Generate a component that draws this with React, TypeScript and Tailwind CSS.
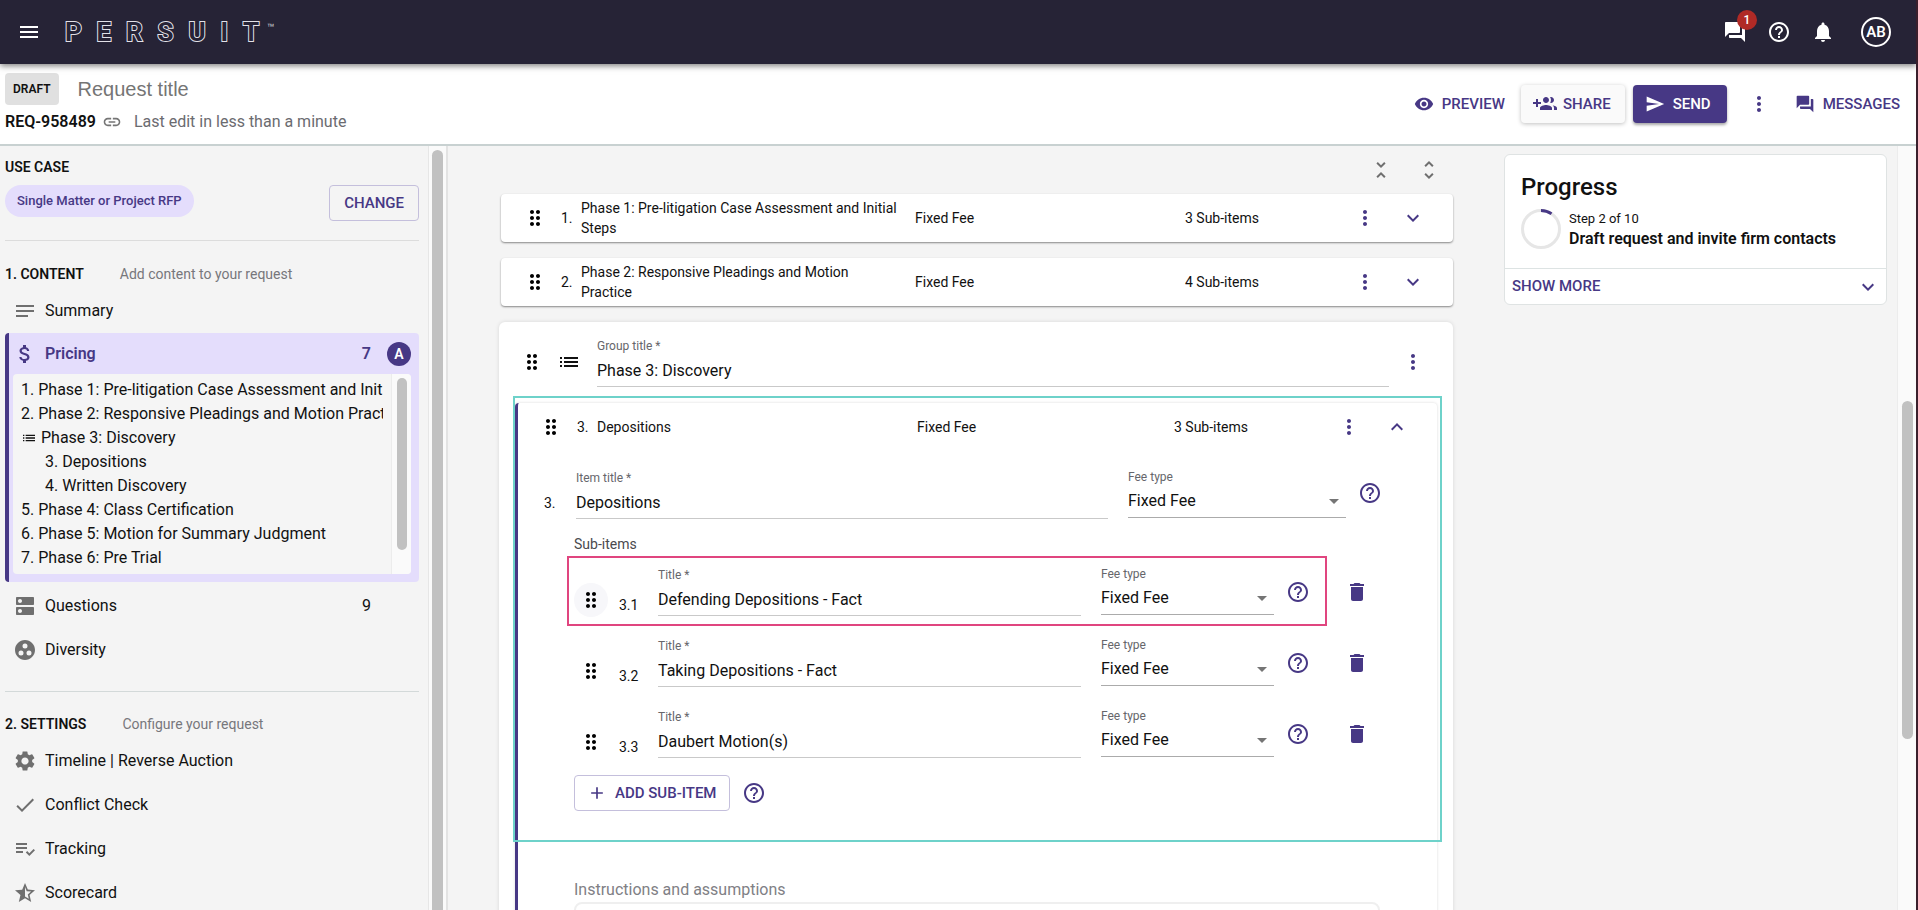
import { useState, type ReactNode } from "react";
import {
  MdAdd,
  MdArrowDropDown,
  MdAttachMoney,
  MdCheck,
  MdDelete,
  MdDns,
  MdDragIndicator,
  MdExpandLess,
  MdExpandMore,
  MdForum,
  MdGroupWork,
  MdHelpOutline,
  MdLink,
  MdList,
  MdMenu,
  MdMoreVert,
  MdNotes,
  MdNotifications,
  MdPlaylistAddCheck,
  MdSend,
  MdSettings,
  MdStarHalf,
  MdUnfoldLess,
  MdUnfoldMore,
  MdVisibility,
} from "react-icons/md";

const outline = [
  { number: "1.", title: "Phase 1: Pre-litigation Case Assessment and Initial Steps" },
  { number: "2.", title: "Phase 2: Responsive Pleadings and Motion Practice" },
  { group: true, title: "Phase 3: Discovery" },
  { number: "3.", title: "Depositions", nested: true },
  { number: "4.", title: "Written Discovery", nested: true },
  { number: "5.", title: "Phase 4: Class Certification" },
  { number: "6.", title: "Phase 5: Motion for Summary Judgment" },
  { number: "7.", title: "Phase 6: Pre Trial" },
];

const phases = [
  {
    number: "1.",
    title: "Phase 1: Pre-litigation Case Assessment and Initial Steps",
    count: "3 Sub-items",
  },
  {
    number: "2.",
    title: "Phase 2: Responsive Pleadings and Motion Practice",
    count: "4 Sub-items",
  },
];

const settings = [
  { icon: <MdSettings />, title: "Timeline | Reverse Auction" },
  { icon: <MdCheck />, title: "Conflict Check" },
  { icon: <MdPlaylistAddCheck />, title: "Tracking" },
  { icon: <MdStarHalf />, title: "Scorecard" },
];

const feeTypes = ["Fixed Fee", "Hourly Rate", "Capped Fee"];

function IconButton({
  label,
  className = "text-[#473885]",
  children,
}: {
  label: string;
  className?: string;
  children: ReactNode;
}) {
  return (
    <button
      type="button"
      aria-label={label}
      className={`flex size-6 shrink-0 items-center justify-center text-2xl ${className}`}
    >
      {children}
    </button>
  );
}

function GroupAddIcon() {
  return (
    <svg viewBox="0 0 24 24" className="size-6" fill="currentColor" aria-hidden="true">
      <path d="M8 10H5V7H3v3H0v2h3v3h2v-3h3v-2zm10 1c1.66 0 2.99-1.34 2.99-3S19.66 5 18 5c-.32 0-.63.05-.91.14.57.81.9 1.79.9 2.86s-.34 2.04-.9 2.86c.28.09.59.14.91.14zm-5 0c1.66 0 2.99-1.34 2.99-3S14.66 5 13 5c-1.66 0-3 1.34-3 3s1.34 3 3 3zm6.62 2.16c.83.73 1.38 1.66 1.38 2.84v2h3v-2c0-1.54-2.37-2.49-4.38-2.84zM13 13c-2 0-6 1-6 3v2h12v-2c0-2-4-3-6-3z" />
    </svg>
  );
}

function Logo() {
  return (
    <a href="#home" aria-label="Persuit" className="flex items-start">
      <span className="flex w-[194px] justify-between text-[26px] leading-8 font-bold text-[#262336] [paint-order:stroke_fill] [-webkit-text-stroke:2px_#e2e1e8]">
        {"PERSUIT".split("").map((letter, i) => (
          <span key={i}>{letter}</span>
        ))}
      </span>
      <span className="ml-2 text-xs leading-6 text-[#c9c8d0]">™</span>
    </a>
  );
}

function TopBar() {
  return (
    <header className="relative z-20 flex h-16 shrink-0 items-center justify-between bg-[#262336] pr-[25px] pl-[17px] text-white shadow-[0_2px_6px_rgba(0,0,0,0.5)]">
      <div className="flex items-center gap-6">
        <IconButton label="Menu" className="text-white">
          <MdMenu />
        </IconButton>
        <Logo />
      </div>
      <div className="flex items-center gap-5">
        <div className="relative">
          <IconButton label="Messages" className="text-white">
            <MdForum />
          </IconButton>
          <span className="absolute -top-2.5 left-3.5 flex size-5 items-center justify-center rounded-full bg-[#b02a26] text-xs font-medium">
            1
          </span>
        </div>
        <IconButton label="Help" className="text-white">
          <MdHelpOutline />
        </IconButton>
        <IconButton label="Notifications" className="text-white">
          <MdNotifications />
        </IconButton>
        <button
          type="button"
          className="ml-1.5 flex size-[30px] items-center justify-center rounded-full border-2 border-white text-[15px] font-semibold"
        >
          AB
        </button>
      </div>
    </header>
  );
}

function RequestBar() {
  return (
    <div className="flex shrink-0 items-start justify-between border-b-2 border-[#c8d1d1] bg-white pt-[9px] pr-4 pb-2.5 pl-[5px]">
      <div>
        <div className="flex items-center gap-[19px]">
          <span className="rounded bg-[#e0e0e0] px-2 text-xs leading-8 font-semibold">
            DRAFT
          </span>
          <input
            aria-label="Request title"
            placeholder="Request title"
            className="w-80 bg-transparent font-['Liberation_Sans',sans-serif] text-xl outline-none placeholder:text-[#757575]"
          />
        </div>
        <div className="mt-[5px] flex items-center text-base leading-6">
          <span className="font-semibold">REQ-958489</span>
          <a href="#link" aria-label="Copy link" className="ml-1.5 text-xl text-[#757575]">
            <MdLink />
          </a>
          <span className="ml-3 text-[#6b6b70]">Last edit in less than a minute</span>
        </div>
      </div>
      <div className="mt-3 flex items-center text-[15px] leading-6 font-medium text-[#473885]">
        <button type="button" className="flex items-center gap-2">
          <MdVisibility className="text-xl" />
          PREVIEW
        </button>
        <button
          type="button"
          className="ml-4 flex h-[38px] items-center gap-1.5 rounded bg-[#fafafa] px-3 pr-3.5 shadow-[0_1px_4px_rgba(0,0,0,0.25)]"
        >
          <GroupAddIcon />
          SHARE
        </button>
        <button
          type="button"
          className="ml-2 flex h-[38px] items-center gap-2 rounded bg-[#473885] px-3 pr-4 text-white shadow-[0_2px_3px_rgba(0,0,0,0.35)]"
        >
          <MdSend className="text-xl" />
          SEND
        </button>
        <div className="mx-5 flex">
          <IconButton label="More actions">
            <MdMoreVert />
          </IconButton>
        </div>
        <button type="button" className="ml-1 flex items-center gap-2">
          <MdForum className="text-xl" />
          MESSAGES
        </button>
      </div>
    </div>
  );
}

function NavItem({ icon, title, count }: { icon: ReactNode; title: string; count?: number }) {
  return (
    <a href={`#${title}`} className="flex h-11 items-center pl-2 text-base">
      <span className="text-2xl text-[#6f6f6f]">{icon}</span>
      <span className="ml-2">{title}</span>
      {count && <span className="mr-12 ml-auto">{count}</span>}
    </a>
  );
}

function SectionHeading({ title, hint }: { title: string; hint: string }) {
  return (
    <div className="mb-[3px] flex items-center gap-9 text-sm leading-6">
      <h2 className="font-semibold">{title}</h2>
      <span className="text-[#77777c]">{hint}</span>
    </div>
  );
}

function Sidebar() {
  return (
    <nav className="flex w-[448px] shrink-0 overflow-hidden border-r-2 border-[#e3e3e3]">
      <div className="min-w-0 flex-1 pt-[9px] pr-[9px] pl-[5px]">
        <h2 className="text-sm leading-6 font-semibold">USE CASE</h2>
        <div className="mt-1.5 flex items-start justify-between">
          <span className="rounded-full bg-[#e4ddfc] px-3 text-[13px] leading-8 font-medium text-[#473885]">
            Single Matter or Project RFP
          </span>
          <button
            type="button"
            className="h-9 rounded border border-[#c4bfdc] px-3.5 text-[15px] font-medium text-[#473885]"
          >
            CHANGE
          </button>
        </div>
        <hr className="mt-[19px] mb-[21px] border-[#dcdcdc]" />
        <SectionHeading title="1. CONTENT" hint="Add content to your request" />
        <NavItem icon={<MdNotes />} title="Summary" />
        <div className="mb-0.5 rounded border-l-4 border-[#473885] bg-[#e4ddfc] px-2 pb-2 pl-1">
          <a
            href="#pricing"
            className="flex h-[41px] items-center text-base font-semibold text-[#473885]"
          >
            <MdAttachMoney className="text-2xl" />
            <span className="ml-2">Pricing</span>
            <span className="mr-4 ml-auto">7</span>
            <span className="flex size-6 items-center justify-center rounded-full bg-[#473885] text-sm text-white">
              A
            </span>
          </a>
          <div className="flex h-[200px] overflow-hidden rounded bg-[#f5f5f5]">
            <ul className="mr-2 min-w-0 flex-1 overflow-hidden pt-1 pl-2 text-base leading-6 whitespace-nowrap">
              {outline.map((item) => (
                <li
                  key={item.title}
                  className={`flex items-center gap-1 ${item.nested ? "pl-6" : ""}`}
                >
                  {item.group ? <MdList className="text-base" /> : <span>{item.number}</span>}
                  <span>{item.title}</span>
                </li>
              ))}
            </ul>
            <div className="flex w-5 justify-center border-l border-[#ececec] bg-[#fafafa] pt-1">
              <div className="h-[172px] w-2.5 rounded-full bg-[#c1c1c1]" />
            </div>
          </div>
        </div>
        <NavItem icon={<MdDns />} title="Questions" count={9} />
        <NavItem icon={<MdGroupWork />} title="Diversity" />
        <hr className="mt-[19px] mb-5 border-[#d3d9d9]" />
        <SectionHeading title="2. SETTINGS" hint="Configure your request" />
        <div className="mt-0.5">
          {settings.map((item) => (
            <NavItem key={item.title} icon={item.icon} title={item.title} />
          ))}
        </div>
      </div>
      <div className="flex w-4.5 justify-center border-l border-[#e6e6e6] bg-[#fafafa] pt-1">
        <div className="h-[1200px] w-[11px] shrink-0 rounded-full bg-[#c1c1c1]" />
      </div>
    </nav>
  );
}

function PhaseRow({ number, title, count }: { number: string; title: string; count: string }) {
  return (
    <div className="flex h-12 items-center rounded bg-white pr-7 pl-[22px] text-sm leading-5 shadow-[0_1px_2px_rgba(0,0,0,0.45)]">
      <IconButton label={`Move ${title}`} className="text-black">
        <MdDragIndicator />
      </IconButton>
      <span className="ml-3.5 w-5">{number}</span>
      <span className="mr-4 w-[318px]">{title}</span>
      <span className="flex-1">Fixed Fee</span>
      <span className="w-[168px]">{count}</span>
      <IconButton label="More">
        <MdMoreVert />
      </IconButton>
      <span className="w-6" />
      <IconButton label="Expand">
        <MdExpandMore />
      </IconButton>
    </div>
  );
}

function TextField({
  id,
  label,
  defaultValue,
}: {
  id: string;
  label: string;
  defaultValue: string;
}) {
  return (
    <div className="min-w-0 flex-1 border-b border-[#c9c9c9]">
      <label htmlFor={id} className="block text-xs leading-4 text-[#66666b]">
        {label} *
      </label>
      <input
        id={id}
        defaultValue={defaultValue}
        className="block h-8 w-full bg-transparent text-base outline-none"
      />
    </div>
  );
}

function FeeSelect({ id, className }: { id: string; className: string }) {
  return (
    <div className={`relative shrink-0 border-b border-[#ababab] ${className}`}>
      <label htmlFor={id} className="block text-xs leading-4 text-[#66666b]">
        Fee type
      </label>
      <select id={id} className="block h-8 w-full appearance-none bg-transparent text-base outline-none">
        {feeTypes.map((type) => (
          <option key={type}>{type}</option>
        ))}
      </select>
      <MdArrowDropDown className="pointer-events-none absolute right-0 bottom-1 text-2xl text-[#757575]" />
    </div>
  );
}

function SubItem({
  number,
  title,
  active,
}: {
  number: string;
  title: string;
  active?: boolean;
}) {
  return (
    <li className="relative flex h-[71px] items-start pt-2.5">
      {active && (
        <div className="pointer-events-none absolute -top-px right-[42px] -left-[7px] h-[70px] border-2 border-[#e0457f]" />
      )}
      <div
        className={`mt-4 flex size-[34px] shrink-0 items-center justify-center rounded-full ${active ? "bg-[#f7f7fa]" : ""}`}
      >
        <IconButton label={`Move ${title}`} className="text-black">
          <MdDragIndicator />
        </IconButton>
      </div>
      <span className="mt-7 ml-[11px] w-[39px] text-sm leading-5">{number}</span>
      <TextField id={`title-${number}`} label="Title" defaultValue={title} />
      <div className="-mt-px ml-5 flex items-start">
        <FeeSelect id={`fee-${number}`} className="w-[173px]" />
        <div className="mt-3.5 ml-3 flex gap-[35px]">
          <IconButton label="Fee type help">
            <MdHelpOutline />
          </IconButton>
          <IconButton label={`Delete ${title}`}>
            <MdDelete />
          </IconButton>
        </div>
      </div>
    </li>
  );
}

function ItemEditor() {
  return (
    <section className="rounded border-l-[3px] border-[#473885] bg-white pb-10 shadow-[0_0_3px_rgba(0,0,0,0.15)]">
      <div className="flex h-12 items-center pr-7 pl-[21px] text-sm leading-5">
        <IconButton label="Move Depositions" className="text-black">
          <MdDragIndicator />
        </IconButton>
        <span className="ml-3.5 w-5">3.</span>
        <span className="w-80">Depositions</span>
        <span className="flex-1">Fixed Fee</span>
        <span className="w-[163px]">3 Sub-items</span>
        <IconButton label="More">
          <MdMoreVert />
        </IconButton>
        <span className="w-6" />
        <IconButton label="Collapse">
          <MdExpandLess />
        </IconButton>
      </div>

      <div className="mt-[19px] flex items-start pr-[55px] pl-[26px]">
        <span className="mt-[23px] w-8 text-sm leading-5">3.</span>
        <TextField id="item-title" label="Item title" defaultValue="Depositions" />
        <div className="-mt-px ml-5 flex items-start gap-3">
          <FeeSelect id="item-fee" className="w-[218px]" />
          <div className="mt-3">
            <IconButton label="Fee type help">
              <MdHelpOutline />
            </IconButton>
          </div>
        </div>
      </div>

      <div className="pr-[57px] pl-14">
        <h3 className="mt-[15px] text-sm leading-5 text-[#4a4a4e]">Sub-items</h3>
        <ul className="mt-[3px] pr-[11px]">
          <SubItem number="3.1" title="Defending Depositions - Fact" active />
          <SubItem number="3.2" title="Taking Depositions - Fact" />
          <SubItem number="3.3" title="Daubert Motion(s)" />
        </ul>
        <div className="mt-[5px] flex items-center gap-3">
          <button
            type="button"
            className="flex h-9 items-center gap-2 rounded border border-[#c4bfdc] px-3 text-[15px] font-medium text-[#473885]"
          >
            <MdAdd className="text-xl" />
            ADD SUB-ITEM
          </button>
          <IconButton label="Sub-item help">
            <MdHelpOutline />
          </IconButton>
        </div>
        <label htmlFor="instructions" className="mt-[67px] block text-base leading-6 text-[#808085]">
          Instructions and assumptions
        </label>
        <textarea
          id="instructions"
          className="block h-32 w-full rounded-lg border-2 border-[#efefef] outline-none"
        />
      </div>
    </section>
  );
}

function PricingEditor() {
  return (
    <main className="min-w-0 flex-1 overflow-hidden pr-[51px] pl-[51px]">
      <div className="flex h-12 items-center justify-end gap-6 pr-3">
        <IconButton label="Collapse all" className="text-[#6f6f6f]">
          <MdUnfoldLess />
        </IconButton>
        <IconButton label="Expand all" className="text-[#6f6f6f]">
          <MdUnfoldMore />
        </IconButton>
      </div>
      <div className="flex flex-col gap-4 pl-0.5">
        {phases.map((phase) => (
          <PhaseRow key={phase.number} {...phase} />
        ))}
      </div>
      <div className="mt-4 rounded-md bg-white pt-4 shadow-[0_0_4px_rgba(0,0,0,0.12)]">
        <div className="flex items-start pr-7 pl-[21px]">
          <div className="mt-3 flex gap-[13px]">
            <IconButton label="Move group" className="text-black">
              <MdDragIndicator />
            </IconButton>
            <MdList className="text-2xl" />
          </div>
          <div className="ml-4 flex flex-1">
            <TextField id="group-title" label="Group title" defaultValue="Phase 3: Discovery" />
          </div>
          <div className="mt-3 ml-3">
            <IconButton label="Group actions">
              <MdMoreVert />
            </IconButton>
          </div>
        </div>
        <div className="relative mt-4 pr-4 pl-4">
          <div className="pointer-events-none absolute -top-[7px] right-[11px] left-3.5 z-10 h-[446px] border-2 border-[#6ed2ca]" />
          <ItemEditor />
        </div>
      </div>
    </main>
  );
}

function Progress() {
  const [open, setOpen] = useState(false);

  return (
    <aside className="w-[383px] shrink-0 pt-2">
      <div className="rounded-md border border-[#dfe3e3] bg-white">
        <div className="px-4 pt-4 pb-[19px]">
          <h2 className="text-2xl leading-8 font-medium">Progress</h2>
          <div className="mt-1.5 flex items-center gap-2">
            <svg viewBox="0 0 40 40" className="size-10" fill="none" strokeWidth="3">
              <circle cx="20" cy="20" r="18.5" stroke="#e6e6e6" />
              <path d="M20 1.5A18.5 18.5 0 0 1 30.5 4.8" stroke="#473885" />
            </svg>
            <div>
              <p className="text-[13px] leading-5">Step 2 of 10</p>
              <p className="text-base leading-5 font-semibold">Draft request and invite firm contacts</p>
            </div>
          </div>
        </div>
        <button
          type="button"
          onClick={() => setOpen(!open)}
          className="flex h-9 w-full items-center justify-between border-t border-[#dde3e3] pr-1.5 pl-[7px] text-[15px] font-medium text-[#473885]"
        >
          {open ? "SHOW LESS" : "SHOW MORE"}
          <MdExpandMore className="text-2xl" />
        </button>
      </div>
    </aside>
  );
}

export default function App() {
  return (
    <div className="flex h-screen flex-col overflow-hidden border-r-2 border-[#3a1f2c] bg-[#f4f4f4] font-[Roboto,sans-serif] text-[#111]">
      <TopBar />
      <RequestBar />
      <div className="flex min-h-0 flex-1">
        <Sidebar />
        <PricingEditor />
        <Progress />
        <div className="ml-2.5 flex w-[19px] shrink-0 justify-center border-l border-[#ececec] bg-[#fafafa] pt-[255px]">
          <div className="h-[338px] w-[11px] rounded-full bg-[#c1c1c1]" />
        </div>
      </div>
    </div>
  );
}
